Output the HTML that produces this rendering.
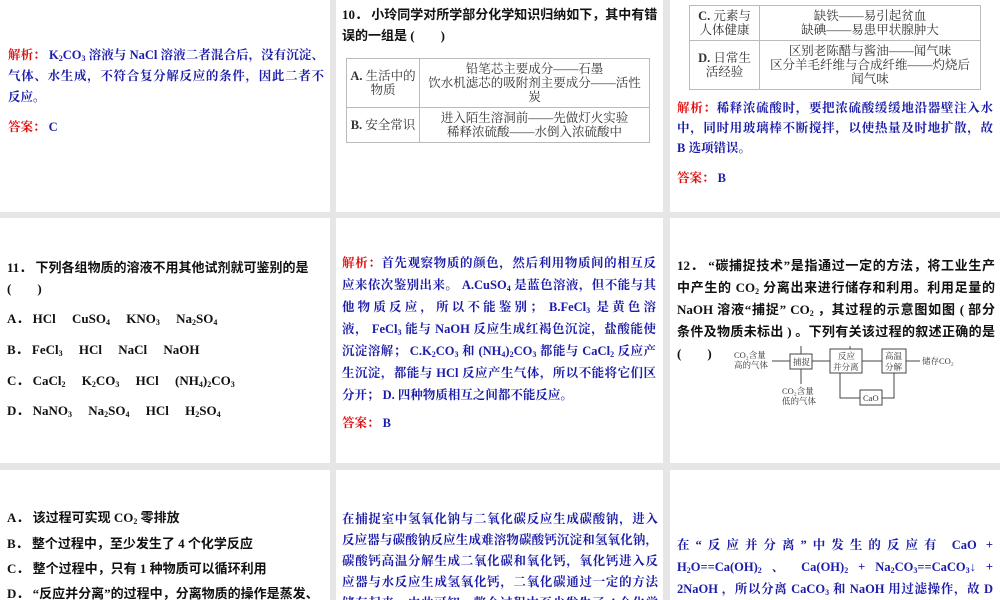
<!DOCTYPE html>
<html><head><meta charset="utf-8"><style>
*{margin:0;padding:0;box-sizing:border-box}
body{width:1000px;height:600px;background:#e6e6e6;position:relative;overflow:hidden;font-family:"Liberation Serif","Noto Serif CJK SC",serif;color:#111}
.p{position:absolute;background:#fff;overflow:hidden}
.t{position:absolute;font-size:13px;white-space:nowrap}
.b{color:#1c1ca8;font-weight:bold;font-size:12.5px}
.b div,.j div{text-align:justify;text-align-last:justify;white-space:nowrap}
.b div.l,.j div.l{text-align-last:left}
.r{color:#e01010;font-weight:bold}
table{position:absolute;border-collapse:collapse;font-size:12.5px;color:#333}
td{border:1px solid #bbb;text-align:center;line-height:14px;padding:1px 3px}
sub{font-size:8px;vertical-align:-2px;line-height:0}
.c{font-weight:bold;font-family:"Liberation Serif","Noto Sans CJK SC",serif}
</style></head><body>
<div class="p" style="left:0;top:0;width:330px;height:212px">
 <div class="t b" style="left:8px;top:45px;width:316px;line-height:21px">
  <div><span class="r">解析：</span> K<sub>2</sub>CO<sub>3</sub> 溶液与 NaCl 溶液二者混合后，没有沉淀、</div>
  <div>气体、水生成，不符合复分解反应的条件，因此二者不</div>
  <div class="l">反应。</div></div>
 <div class="t b" style="left:8px;top:117px"><span class="r">答案：</span> C</div>
</div>
<div class="p" style="left:336px;top:0;width:327px;height:212px">
 <div class="t c" style="left:6px;top:4px;line-height:21px">10． 小玲同学对所学部分化学知识归纳如下，其中有错<br>误的一组是 (　　)</div>
 <table style="left:10px;top:58px;width:304px">
 <tr style="height:49px"><td style="width:73px"><b>A.</b> 生活中的物质</td><td style="padding:1px 6px">铅笔芯主要成分——石墨<br>饮水机滤芯的吸附剂主要成分——活性炭</td></tr>
 <tr style="height:35px"><td><b>B.</b> 安全常识</td><td>进入陌生溶洞前——先做灯火实验<br>稀释浓硫酸——水倒入浓硫酸中</td></tr>
 </table>
</div>
<div class="p" style="left:670px;top:0;width:330px;height:212px">
 <table style="left:19px;top:5px;width:292px">
 <tr style="height:35px"><td style="width:70px"><b>C.</b> 元素与人体健康</td><td>缺铁——易引起贫血<br>缺碘——易患甲状腺肿大</td></tr>
 <tr style="height:49px"><td><b>D.</b> 日常生活经验</td><td style="padding:1px 10px">区别老陈醋与酱油——闻气味<br>区分羊毛纤维与合成纤维——灼烧后<br>闻气味</td></tr>
 </table>
 <div class="t b" style="left:7px;top:98px;width:316px;line-height:20px">
  <div><span class="r">解析：</span>稀释浓硫酸时，要把浓硫酸缓缓地沿器壁注入水</div>
  <div>中，同时用玻璃棒不断搅拌，以使热量及时地扩散，故</div>
  <div class="l">B 选项错误。</div></div>
 <div class="t b" style="left:7px;top:168px"><span class="r">答案：</span> B</div>
</div>

<div class="p" style="left:0;top:218px;width:330px;height:245px">
 <div class="t c" style="left:7px;top:39px;line-height:21px">11． 下列各组物质的溶液不用其他试剂就可鉴别的是<br>(　　)</div>
 <div class="t c" style="left:7px;top:90px">A． HCl　 CuSO<sub>4</sub>　 KNO<sub>3</sub>　 Na<sub>2</sub>SO<sub>4</sub></div>
 <div class="t c" style="left:7px;top:121px">B． FeCl<sub>3</sub>　 HCl　 NaCl　 NaOH</div>
 <div class="t c" style="left:7px;top:152px">C． CaCl<sub>2</sub>　 K<sub>2</sub>CO<sub>3</sub>　 HCl　 (NH<sub>4</sub>)<sub>2</sub>CO<sub>3</sub></div>
 <div class="t c" style="left:7px;top:182px">D． NaNO<sub>3</sub>　 Na<sub>2</sub>SO<sub>4</sub>　 HCl　 H<sub>2</sub>SO<sub>4</sub></div>
</div>
<div class="p" style="left:336px;top:218px;width:327px;height:245px">
 <div class="t b" style="left:6px;top:34px;width:314px;line-height:22px">
  <div><span class="r">解析：</span>首先观察物质的颜色，然后利用物质间的相互反</div>
  <div>应来依次鉴别出来。 A.CuSO<sub>4</sub> 是蓝色溶液，但不能与其</div>
  <div>他物质反应，所以不能鉴别； B.FeCl<sub>3</sub> 是黄色溶</div>
  <div>液， FeCl<sub>3</sub> 能与 NaOH 反应生成红褐色沉淀，盐酸能使</div>
  <div>沉淀溶解； C.K<sub>2</sub>CO<sub>3</sub> 和 (NH<sub>4</sub>)<sub>2</sub>CO<sub>3</sub> 都能与 CaCl<sub>2</sub> 反应产</div>
  <div>生沉淀，都能与 HCl 反应产生气体，所以不能将它们区</div>
  <div class="l">分开； D. 四种物质相互之间都不能反应。</div></div>
 <div class="t b" style="left:6px;top:195px"><span class="r">答案：</span> B</div>
</div>
<div class="p" style="left:670px;top:218px;width:330px;height:245px">
 <div class="t c j" style="left:7px;top:37px;width:318px;line-height:22px">
  <div>12． “碳捕捉技术”是指通过一定的方法，将工业生产</div>
  <div>中产生的 CO<sub>2</sub> 分离出来进行储存和利用。利用足量的</div>
  <div>NaOH 溶液“捕捉” CO<sub>2</sub> ，其过程的示意图如图 ( 部分</div>
  <div>条件及物质未标出 ) 。下列有关该过程的叙述正确的是</div></div>
 <div class="t c" style="left:7px;top:125px">(　　)</div>
 <svg style="position:absolute;left:60px;top:128px" width="290" height="70" viewBox="0 0 290 70" font-family="Liberation Serif,Noto Serif CJK SC,serif" font-size="8.5" fill="#333">
  <g stroke="#444" fill="none" stroke-width="1">
   <rect x="60" y="8" width="22" height="15"/><rect x="100" y="3" width="32" height="24"/><rect x="152" y="3" width="24" height="24"/><rect x="130" y="44" width="22" height="15"/>
   <line x1="42" y1="15" x2="60" y2="15"/><line x1="82" y1="15" x2="100" y2="15"/><line x1="132" y1="15" x2="152" y2="15"/><line x1="176" y1="15" x2="190" y2="15"/>
   <line x1="71" y1="23" x2="71" y2="38"/><polyline points="71,8 71,-2 120,-2 120,3"/>
   <polyline points="164,27 164,52 152,52"/><polyline points="130,52 110,52 110,27"/>
  </g>
  <text x="4" y="12">CO₂含量</text><text x="4" y="22">高的气体</text>
  <text x="63" y="19">捕捉</text><text x="108" y="13">反应</text><text x="103" y="24">并分离</text>
  <text x="155" y="13">高温</text><text x="155" y="24">分解</text><text x="192" y="18">储存CO₂</text>
  <text x="133" y="55">CaO</text><text x="52" y="48">CO₂含量</text><text x="52" y="58">低的气体</text>
 </svg>
</div>

<div class="p" style="left:0;top:470px;width:330px;height:130px">
 <div class="t c" style="left:7px;top:37px">A． 该过程可实现 CO<sub>2</sub> 零排放</div>
 <div class="t c" style="left:7px;top:63px">B． 整个过程中，至少发生了 4 个化学反应</div>
 <div class="t c" style="left:7px;top:88px">C． 整个过程中，只有 1 种物质可以循环利用</div>
 <div class="t c" style="left:7px;top:113px">D． “反应并分离”的过程中，分离物质的操作是蒸发、</div>
</div>
<div class="p" style="left:336px;top:470px;width:327px;height:130px">
 <div class="t b" style="left:6px;top:39px;width:316px;line-height:21px">
  <div>在捕捉室中氢氧化钠与二氧化碳反应生成碳酸钠，进入</div>
  <div>反应器与碳酸钠反应生成难溶物碳酸钙沉淀和氢氧化钠，</div>
  <div>碳酸钙高温分解生成二氧化碳和氧化钙，氧化钙进入反</div>
  <div>应器与水反应生成氢氧化钙，二氧化碳通过一定的方法</div>
  <div>储存起来，由此可知，整个过程中至少发生了 4 个化学</div></div>
</div>
<div class="p" style="left:670px;top:470px;width:330px;height:130px">
 <div class="t b" style="left:7px;top:64px;width:316px;line-height:22px">
  <div>在“反应并分离”中发生的反应有 CaO +</div>
  <div>H<sub>2</sub>O==Ca(OH)<sub>2</sub> 、 Ca(OH)<sub>2</sub> + Na<sub>2</sub>CO<sub>3</sub>==CaCO<sub>3</sub>↓ +</div>
  <div>2NaOH ，所以分离 CaCO<sub>3</sub> 和 NaOH 用过滤操作，故 D</div></div>
</div>
</body></html>
